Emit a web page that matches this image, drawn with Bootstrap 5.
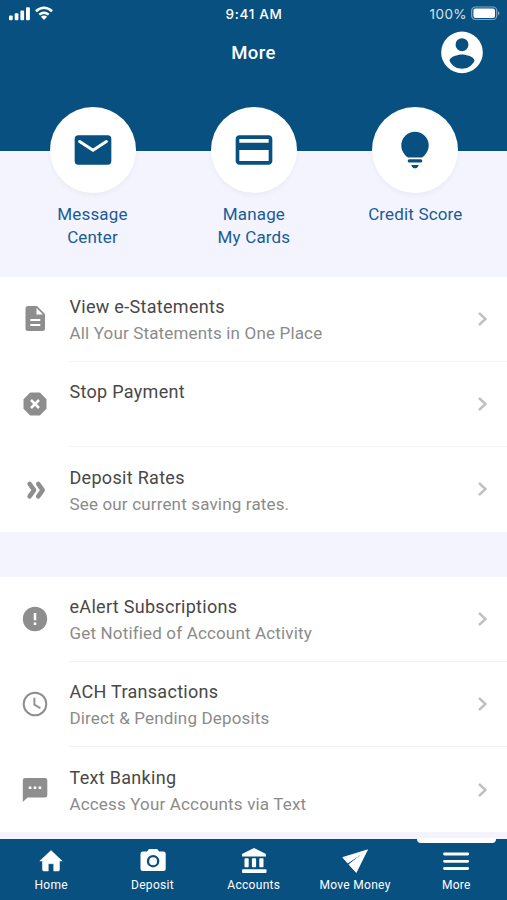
<!DOCTYPE html>
<html lang="en">
<head>
<meta charset="utf-8">
<meta name="viewport" content="width=device-width, initial-scale=1">
<title>More</title>
<link href="https://cdn.jsdelivr.net/npm/bootstrap@5.3.0/dist/css/bootstrap.min.css" rel="stylesheet">
<style>
:root{--navy:#08507f;--mist:#f3f4fe}
body{font-family:Roboto,"Liberation Sans",sans-serif;background:var(--mist);height:900px;overflow:hidden;color:#484848}
svg{display:block;flex:none}
.top-area{background:var(--navy);height:151px;color:#fff}
.status-bar{height:27px;padding:0 7px 0 8px;display:grid;grid-template-columns:1fr auto 1fr;align-items:center}
.clock{font:500 13.5px/16px Inter,Roboto,sans-serif;letter-spacing:.7px}
.percent{font:400 13.5px/16px Inter,Roboto,sans-serif;letter-spacing:.4px;color:#d5e2ec}
.title-bar{height:51px;display:grid;grid-template-columns:1fr auto 1fr;align-items:center;padding:0 20px}
.screen-title{font:500 18.5px/24px Roboto,sans-serif;letter-spacing:.4px}
.shortcuts{margin-top:-44px;height:169.5px;padding:0 11px 0 11.8px;color:#1a5b96}
.shortcut{flex:1 1 0;font-size:17px;line-height:22.5px;letter-spacing:.15px}
.disc{width:86px;height:86px;margin-bottom:10px;color:var(--navy);box-shadow:0 3px 5px rgba(0,0,0,.035)}
.menu-row{height:84.4px;border:0;padding:0 17px 0 0;background:#fff}
.menu-icon{width:69.5px;color:#8e8e8e;padding-top:27.3px;padding-left:21px}
.menu-body{padding-top:18.4px}
.menu-row + .menu-row{height:85.4px;padding-top:1px;background:linear-gradient(#f4f4f4,#f4f4f4) 69px 0/100% 1.2px no-repeat #fff}
.menu-title{font-size:18px;line-height:24px;letter-spacing:.3px}
.menu-sub{font-size:17px;line-height:22px;margin-top:3px;color:#8b8b8b;letter-spacing:.16px}
.chev{padding-top:33.1px}
.gap-band{height:45px}
.tabs{background:var(--navy);height:61.5px;color:#fff;padding-left:.6px}
.tab{flex:1 1 0;font-size:12px;line-height:16px;letter-spacing:.3px;padding-top:7px;position:relative}
.tab.current::before{content:"";position:absolute;top:-1px;left:11px;right:11px;height:5px;background:#fff;border-radius:0 0 4px 4px}
.tab svg{margin-bottom:1.5px}
</style>
<script src="https://cdn.jsdelivr.net/npm/bootstrap@5.3.0/dist/js/bootstrap.bundle.min.js"></script>
</head>
<body class="d-flex flex-column">
<header class="top-area flex-shrink-0">
  <div class="status-bar">
    <div class="d-flex">
      <svg width="48" height="16" viewBox="0 0 48 16"><g fill="#fff"><rect x="1" y="9.5" width="3.7" height="4.7" rx="1"/><rect x="6.7" y="7.3" width="3.7" height="6.9" rx="1"/><rect x="12.4" y="4.4" width="3.7" height="9.8" rx="1"/><rect x="18" y="1.3" width="3.9" height="12.9" rx="1"/><path d="M36 13.9l-3.1-3.1q3.1-2.500 6.200 0z"/></g><g fill="none" stroke="#fff" stroke-width="2.500"><path d="M31.300 8.600q4.700-3.800 9.400 0"/><path d="M27.900 5.200q8.100-6.800 16.200 0"/></g></svg>
    </div>
    <div class="clock">9:41 AM</div>
    <div class="d-flex justify-content-end align-items-center gap-1">
      <span class="percent">100%</span>
      <svg width="29" height="15" viewBox="0 0 29 15"><rect x=".7" y="1" width="25" height="12.5" rx="3.6" fill="none" stroke="#82a7bf" stroke-width="1.2"/><rect x="2.4" y="2.6" width="21.6" height="9.3" rx="2" fill="#fff"/><path d="M27 5.200q1.400.7 1.400 2T27 9.300z" fill="#82a7bf"/></svg>
    </div>
  </div>
  <div class="title-bar">
    <span></span><h1 class="screen-title m-0">More</h1>
    <svg class="ms-auto" width="50" height="50" viewBox="0 0.300 24 24" fill="#fff"><path fill-rule="evenodd" d="M12 2a10 10 0 1 0 0 20 10 10 0 0 0 0-20zm0 3.200a3.100 3.100 0 1 1 0 6.200 3.100 3.100 0 0 1 0-6.200zM12 19.800c-2.500 0-4.700-1.100-6-3.800.1-2 4-3 6-3s5.900 1 6 3c-1.300 2.700-3.500 3.800-6 3.800z"/></svg>
  </div>
</header>

<section class="shortcuts d-flex flex-shrink-0 text-center">
  <div class="shortcut d-flex flex-column align-items-center">
    <div class="disc rounded-circle bg-white d-flex align-items-center justify-content-center"><svg width="44" height="44" viewBox="0 0 24 24" fill="currentColor"><path d="M20 4H4a2 2 0 0 0-2 2v12a2 2 0 0 0 2 2h16a2 2 0 0 0 2-2V6a2 2 0 0 0-2-2z"/><path d="M4.700 7.400 12 12.100l7.300-4.700" fill="none" stroke="#fff" stroke-width="1.650" stroke-linecap="round"/></svg></div>
    <div>Message<br>Center</div>
  </div>
  <div class="shortcut d-flex flex-column align-items-center">
    <div class="disc rounded-circle bg-white d-flex align-items-center justify-content-center"><svg width="44" height="44" viewBox="0 0 24 24" fill="currentColor"><path d="M20 4H4c-1.110 0-1.990.89-1.990 2L2 18c0 1.110.89 2 2 2h16c1.110 0 2-.89 2-2V6c0-1.110-.89-2-2-2zm0 14H4v-6h16v6zm0-10H4V6h16v2z"/></svg></div>
    <div>Manage<br>My Cards</div>
  </div>
  <div class="shortcut d-flex flex-column align-items-center">
    <div class="disc rounded-circle bg-white d-flex align-items-center justify-content-center"><svg width="28" height="38" viewBox="0 0 28 38" fill="currentColor"><path d="M14 .8A13.700 13.700 0 0 0 .3 14.500C.3 19.500 3 23.700 7 26.600h14c4-2.900 6.700-7.100 6.700-12.100A13.700 13.700 0 0 0 14 .8z"/><rect x="6.700" y="28.300" width="14.600" height="3.300" rx="1.600"/><path d="M10.300 33.900h7.400Q16.700 37.300 14 37.300t-3.700-3.400z"/></svg></div>
    <div>Credit Score</div>
  </div>
</section>

<main class="flex-shrink-0">
  <div class="list-group list-group-flush">
    <a href="#" class="menu-row list-group-item d-flex text-reset">
      <div class="menu-icon"><svg width="28" height="30" viewBox="0 0 28 30"><path fill="currentColor" d="M7 2h9l8 8v14.500q0 2.500-2.500 2.500H7q-2.500 0-2.500-2.500v-20Q4.500 2 7 2z"/><path fill="#fff" d="M15.500 4v6.500H22z"/><path stroke="#fff" stroke-width="2" d="M9.300 16h10M9.300 21h10"/></svg></div>
      <div class="menu-body flex-grow-1"><div class="menu-title">View e-Statements</div><div class="menu-sub">All Your Statements in One Place</div></div>
      <div class="chev"><svg width="14" height="18" viewBox="0 0 14 18"><path d="M3 3l6.500 6L3 15" fill="none" stroke="#c0c0c0" stroke-width="2.400"/></svg></div>
    </a>
    <a href="#" class="menu-row list-group-item d-flex text-reset">
      <div class="menu-icon"><svg width="28" height="30" viewBox="0 0 28 30"><path fill="currentColor" stroke="currentColor" stroke-width="2" stroke-linejoin="round" d="M9.600 4.500h8.800l6.100 6.100v8.800l-6.100 6.100H9.600l-6.100-6.100v-8.800z"/><path stroke="#fff" stroke-width="2.500" d="m10 11 8 8m0-8-8 8"/></svg></div>
      <div class="menu-body flex-grow-1"><div class="menu-title">Stop Payment</div></div>
      <div class="chev"><svg width="14" height="18" viewBox="0 0 14 18"><path d="M3 3l6.500 6L3 15" fill="none" stroke="#c0c0c0" stroke-width="2.400"/></svg></div>
    </a>
    <a href="#" class="menu-row list-group-item d-flex text-reset">
      <div class="menu-icon"><svg width="28" height="30" viewBox="0 0 28 30"><path fill="none" stroke="currentColor" stroke-width="4.500" stroke-linecap="round" stroke-linejoin="round" d="m8.600 8.900 4.500 6.200-4.500 6.300m8.600-12.500 4.500 6.200-4.500 6.300"/></svg></div>
      <div class="menu-body flex-grow-1"><div class="menu-title">Deposit Rates</div><div class="menu-sub">See our current saving rates.</div></div>
      <div class="chev"><svg width="14" height="18" viewBox="0 0 14 18"><path d="M3 3l6.500 6L3 15" fill="none" stroke="#c0c0c0" stroke-width="2.400"/></svg></div>
    </a>
  </div>
  <div class="gap-band"></div>
  <div class="list-group list-group-flush">
    <a href="#" class="menu-row list-group-item d-flex text-reset">
      <div class="menu-icon"><svg width="28" height="30" viewBox="0 0 28 30"><circle cx="14" cy="15" r="12.200" fill="currentColor"/><path stroke="#fff" stroke-width="2.500" d="M14 9v7.300m0 2.300v2.500"/></svg></div>
      <div class="menu-body flex-grow-1"><div class="menu-title">eAlert Subscriptions</div><div class="menu-sub">Get Notified of Account Activity</div></div>
      <div class="chev"><svg width="14" height="18" viewBox="0 0 14 18"><path d="M3 3l6.500 6L3 15" fill="none" stroke="#c0c0c0" stroke-width="2.400"/></svg></div>
    </a>
    <a href="#" class="menu-row list-group-item d-flex text-reset">
      <div class="menu-icon"><svg width="28" height="30" viewBox="0 0 28 30" fill="none" stroke="currentColor"><circle cx="14" cy="15" r="11.300" stroke-width="2"/><path stroke-width="1.900" d="M13.400 8.800v6.800l6 3.600"/></svg></div>
      <div class="menu-body flex-grow-1"><div class="menu-title">ACH Transactions</div><div class="menu-sub">Direct &amp; Pending Deposits</div></div>
      <div class="chev"><svg width="14" height="18" viewBox="0 0 14 18"><path d="M3 3l6.500 6L3 15" fill="none" stroke="#c0c0c0" stroke-width="2.400"/></svg></div>
    </a>
    <a href="#" class="menu-row list-group-item d-flex text-reset">
      <div class="menu-icon"><svg width="28" height="30" viewBox="0 0 28 30"><path fill="currentColor" d="M4 3h20q2.300 0 2.300 2.300v15q0 2.300-2.300 2.300H6.600L1.800 27V5.300Q1.800 3 4 3z"/><path fill="#fff" d="M7.800 11.500h2.600v2.600H7.800zm4.900 0h2.600v2.600h-2.600zm4.900 0h2.600v2.600h-2.600z"/></svg></div>
      <div class="menu-body flex-grow-1"><div class="menu-title">Text Banking</div><div class="menu-sub">Access Your Accounts via Text</div></div>
      <div class="chev"><svg width="14" height="18" viewBox="0 0 14 18"><path d="M3 3l6.500 6L3 15" fill="none" stroke="#c0c0c0" stroke-width="2.400"/></svg></div>
    </a>
  </div>
</main>

<nav class="tabs d-flex mt-auto flex-shrink-0">
  <div class="tab d-flex flex-column align-items-center"><svg width="30" height="30" viewBox="0 0 30 30"><path fill="#fff" stroke="#fff" stroke-width=".5" stroke-linejoin="round" d="M15 4.500 26.200 15h-2.700v8.500q0 1.500-1.500 1.500h-4.300v-7.300h-5.400V25H8q-1.500 0-1.500-1.500V15H3.800z"/></svg>Home</div>
  <div class="tab d-flex flex-column align-items-center"><svg width="30" height="30" viewBox="0 0 30 30"><path fill="#fff" d="m11 3-2 2.500H5Q2.500 5.500 2.500 8v14.500Q2.500 25 5 25h20.200q2.500 0 2.500-2.500V8q0-2.500-2.500-2.500h-4L19.200 3z"/><circle cx="15.100" cy="15.200" r="5.100" fill="none" stroke="#08507f" stroke-width="2.300"/></svg>Deposit</div>
  <div class="tab d-flex flex-column align-items-center"><svg width="30" height="30" viewBox="0 0 30 30" fill="#fff"><path d="M15 2 27 8v2.600H3V8z"/><rect x="3" y="23.300" width="24.500" height="3.600" rx="1"/><rect x="5.500" y="12.300" width="4.200" height="9" rx=".8"/><rect x="12.900" y="12.300" width="4.200" height="9" rx=".8"/><rect x="20.300" y="12.300" width="4.200" height="9" rx=".8"/></svg>Accounts</div>
  <div class="tab d-flex flex-column align-items-center"><svg width="30" height="30" viewBox="0 0 30 30"><g fill="#fff" stroke="#fff" stroke-width=".9" stroke-linejoin="round"><path d="M27.300 4 2.800 11.500l4.900 5.500z"/><path d="M27.300 4 9 18.500l7.200 7.900z"/></g></svg>Move Money</div>
  <div class="tab current d-flex flex-column align-items-center"><svg width="30" height="30" viewBox="0 0 30 30"><path stroke="#fff" stroke-width="2.800" stroke-linecap="round" d="M3.500 8h23.200M3.500 15.300h23.200M3.500 22.500h23.200"/></svg>More</div>
</nav>
</body>
</html>
